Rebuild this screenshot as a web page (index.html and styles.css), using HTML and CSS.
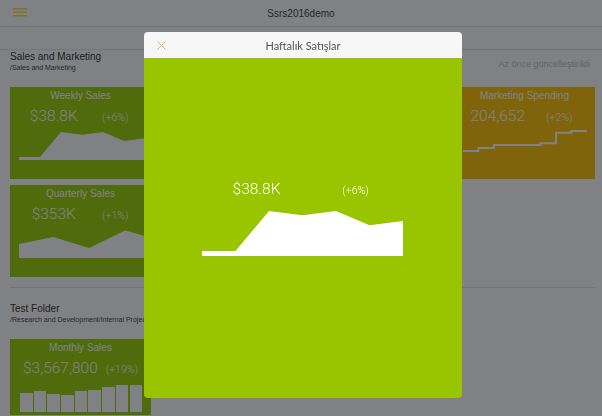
FILE: index.html
```html
<!DOCTYPE html>
<html lang="tr">
<head>
<meta charset="utf-8">
<title>Ssrs2016demo</title>
<link rel="stylesheet" href="styles.css">
</head>
<body>
<div class="app">
  <header class="topbar">
    <button class="menu-btn" aria-label="Menu">
      <svg width="14" height="9" viewBox="0 0 14 9"><path d="M0 0.75H14M0 4.25H14M0 7.75H14" stroke="currentColor" stroke-width="1.4" fill="none"/></svg>
    </button>
    <h1 class="app-title">Ssrs2016demo</h1>
    <span></span>
  </header>
  <div class="toolbar"></div>
  <main class="content">
    <section class="folder">
      <div class="folder-head">
        <div class="folder-names">
          <h2 class="folder-title">Sales and Marketing</h2>
          <div class="folder-path">/Sales and Marketing</div>
        </div>
        <div class="updated">Az önce güncelleştirildi</div>
      </div>
      <div class="tiles">
        <div class="tile tile-green">
          <div class="tile-title">Weekly Sales</div>
          <div class="tile-values"><span class="tile-value">$38.8K</span><span class="tile-change">(+6%)</span></div>
          <svg class="tile-chart" viewBox="0 0 126 28" preserveAspectRatio="none"><polygon points="0,28 0,24.9 21,24.9 42,0 63,2.7 84,0 105,8.9 126,6.2 126,28" fill="#fff"/></svg>
        </div>
        <div class="tile tile-gold col-4">
          <div class="tile-title">Marketing Spending</div>
          <div class="tile-values"><span class="tile-value">204,652</span><span class="tile-change">(+2%)</span></div>
          <svg class="tile-chart" viewBox="0 0 126 28" preserveAspectRatio="none"><polyline points="0,19 15.5,19 15.5,16 31,16 31,13 77.5,13 77.5,11.3 93,11.3 93,0.7 108.5,0.7 108.5,-1 124,-1" fill="none" stroke="#fff" stroke-width="2"/></svg>
        </div>
        <div class="tile tile-green">
          <div class="tile-title">Quarterly Sales</div>
          <div class="tile-values"><span class="tile-value">$353K</span><span class="tile-change">(+1%)</span></div>
          <svg class="tile-chart" viewBox="0 0 126 28" preserveAspectRatio="none"><polygon points="0,28 0,14 34,7 70,18 106,0.6 126,6 126,28" fill="#fff"/></svg>
        </div>
      </div>
    </section>
    <section class="folder folder-sep">
      <div class="folder-head">
        <div class="folder-names">
          <h2 class="folder-title">Test Folder</h2>
          <div class="folder-path">/Research and Development/Internal Projects</div>
        </div>
      </div>
      <div class="tiles">
        <div class="tile tile-green">
          <div class="tile-title">Monthly Sales</div>
          <div class="tile-values"><span class="tile-value">$3,567,800</span><span class="tile-change">(+19%)</span></div>
          <div class="bars">
            <span class="bar" style="height:19.3px"></span>
            <span class="bar" style="height:20.6px"></span>
            <span class="bar" style="height:18.3px"></span>
            <span class="bar" style="height:17px"></span>
            <span class="bar" style="height:21px"></span>
            <span class="bar" style="height:22.3px"></span>
            <span class="bar" style="height:25.3px"></span>
            <span class="bar" style="height:27.3px"></span>
            <span class="bar" style="height:27.3px"></span>
          </div>
        </div>
      </div>
    </section>
  </main>
</div>
<div class="backdrop"></div>
<div class="modal" role="dialog">
  <div class="modal-head">
    <button class="close-btn" aria-label="Kapat">
      <svg width="9" height="9" viewBox="0 0 9 9"><path d="M0.5 0.5L8.5 8.5M8.5 0.5L0.5 8.5" stroke="currentColor" stroke-width="1" fill="none"/></svg>
    </button>
    <div class="modal-title">Haftalık Satışlar</div>
    <span class="head-spacer"></span>
  </div>
  <div class="modal-body">
    <div class="modal-values"><span class="modal-value">$38.8K</span><span class="modal-change">(+6%)</span></div>
    <svg class="modal-chart" viewBox="0 0 126 28" preserveAspectRatio="none"><polygon points="0,28 0,24.9 21,24.9 42,0 63,2.7 84,0 105,8.9 126,6.2 126,28" fill="#fff"/></svg>
  </div>
</div>
</body>
</html>
```
FILE: styles.css
```css
html, body {
  margin: 0;
  padding: 0;
  height: 100%;
  overflow: hidden;
}

body {
  background: #ffffff;
  font-family: "Liberation Sans", Arial, sans-serif;
  color: #3a3a3a;
}

.app {
  width: 602px;
  height: 415px;
  overflow: hidden;
}

.topbar {
  height: 26px;
  border-bottom: 1px solid #e6e6e6;
  display: grid;
  grid-template-columns: 1fr auto 1fr;
  align-items: center;
}

.menu-btn {
  justify-self: start;
  margin: -1px 0 0 13px;
  padding: 0;
  border: 0;
  background: none;
  color: #ffde4c;
  display: flex;
  height: 9px;
}

.app-title {
  margin: 0;
  padding-top: 1px;
  font-size: 10px;
  font-weight: normal;
  color: #4a4a4a;
}

.toolbar {
  height: 22px;
  border-bottom: 1px solid #e6e6e6;
}

.content {
  padding: 0 7px 0 10px;
}

.folder-head {
  display: flex;
  justify-content: space-between;
  height: 22px;
}

.folder-title {
  margin: 0;
  font-size: 10px;
  line-height: 13px;
  font-weight: normal;
  color: #3a3a3a;
}

.folder-path {
  font-size: 7px;
  line-height: 9px;
  color: #4a4a4a;
  white-space: nowrap;
}

.updated {
  font-size: 9px;
  line-height: 12px;
  margin: 8px 5px 0 0;
  color: #c4c4c4;
}

.tiles {
  margin-top: 15px;
  display: grid;
  grid-template-columns: repeat(4, 141px);
  gap: 6px 7px;
}

.folder-sep {
  margin-top: 10px;
  border-top: 1px solid #e6e6e6;
  padding-top: 14px;
}

.tile {
  height: 92px;
  box-sizing: border-box;
  padding-top: 1px;
  color: #fff;
}

.col-4 {
  grid-column: 4;
}

.tile-green {
  background: #9dd30f;
}

.tile-gold {
  background: #fdc50f;
}

.tile-title {
  font-size: 10px;
  line-height: 14px;
  text-align: center;
  padding-top: 1px;
}

.tile-values {
  display: flex;
  align-items: baseline;
  margin: 4px 5px 0 13px;
  line-height: 18px;
  white-space: nowrap;
}

.tile-values > span {
  flex: 1;
  text-align: center;
}

.tile-value,
.tile-change,
.modal-value,
.modal-change {
  font-family: Roboto, "Liberation Sans", sans-serif;
  font-weight: 300;
}

.tile-value {
  font-size: 15.5px;
}

.tile-change {
  font-size: 10.5px;
}

.tile-chart {
  display: block;
  margin: 5px 0 0 9px;
  width: 126px;
  height: 28px;
  overflow: visible;
}

.bars {
  display: flex;
  align-items: flex-end;
  gap: 1.2px;
  margin: 5px 0 0 10px;
  height: 28px;
}

.bar {
  width: 12.5px;
  background: #fff;
}

.backdrop {
  position: fixed;
  inset: 0;
  background: rgba(1, 3, 9, 0.5);
}

.modal {
  position: fixed;
  left: 144px;
  top: 32px;
  width: 318px;
  height: 366px;
  border-radius: 4px;
  overflow: hidden;
  display: flex;
  flex-direction: column;
}

.modal-head {
  height: 26px;
  flex: none;
  background: #f7f7f7;
  display: flex;
  align-items: center;
}

.close-btn {
  width: 34px;
  height: 26px;
  padding: 0;
  border: 0;
  background: none;
  color: #dcbc4c;
  display: flex;
  align-items: center;
  justify-content: center;
}

.head-spacer {
  width: 34px;
}

.modal-title {
  flex: 1;
  text-align: center;
  font-family: Lato, "Liberation Sans", sans-serif;
  font-size: 11px;
  color: #555;
}

.modal-body {
  flex: 1;
  background: #98c500;
  padding-top: 122px;
  color: #fff;
}

.modal-values {
  display: flex;
  align-items: baseline;
  margin: 0 57px 0 63px;
  line-height: 18px;
}

.modal-values > span {
  flex: 1;
  text-align: center;
}

.modal-value {
  font-size: 15.5px;
}

.modal-change {
  font-size: 10.5px;
}

.modal-chart {
  display: block;
  margin: 11px 0 0 58px;
  width: 201px;
  height: 45px;
}
```
